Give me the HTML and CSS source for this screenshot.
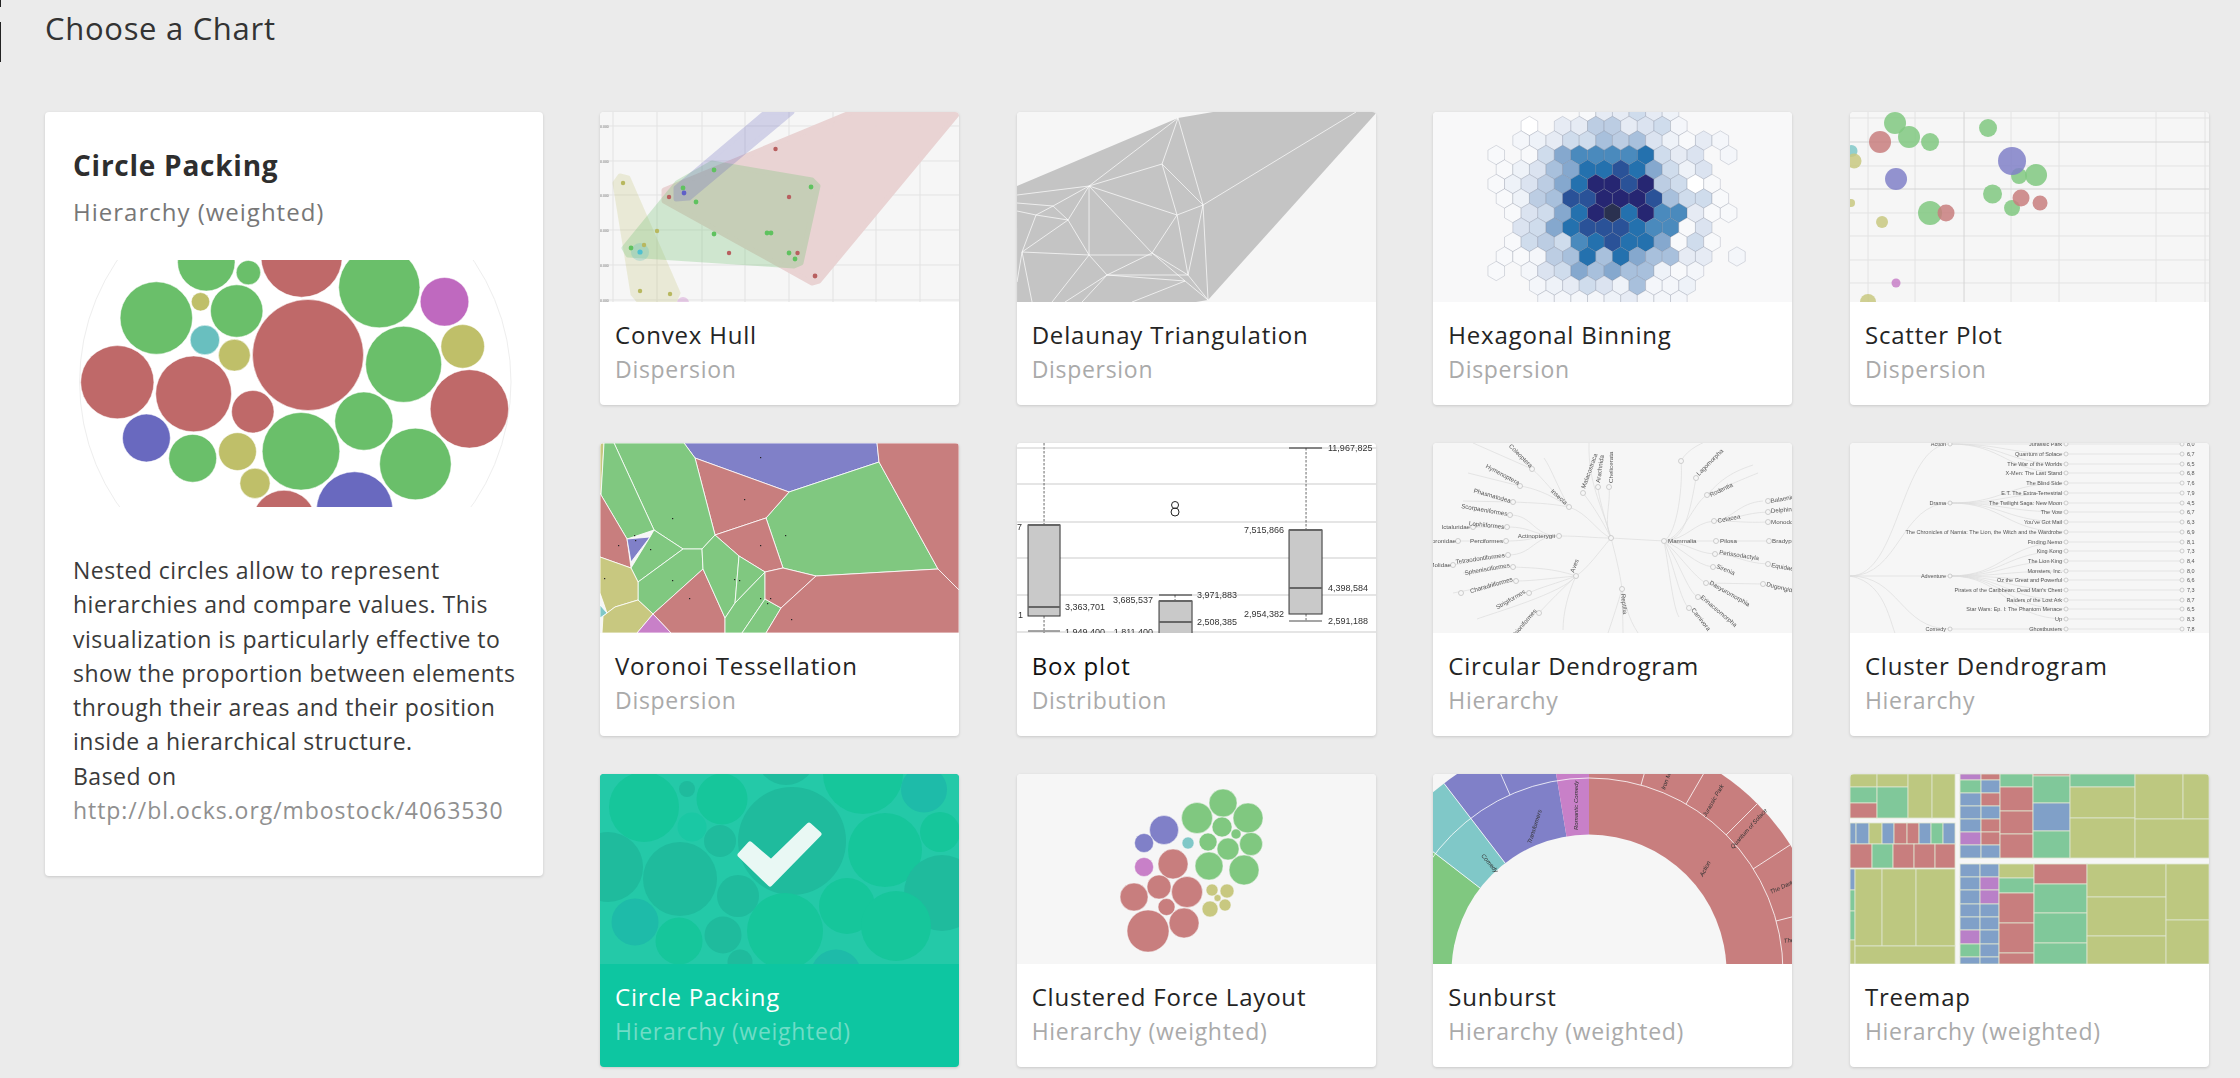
FILE: index.html
```html
<!DOCTYPE html>
<html lang="en">
<head>
<meta charset="utf-8">
<title>Choose a Chart</title>
<link rel="stylesheet" href="styles.css">
</head>
<body>
<div class="marks"><i class="mark-a"></i><i class="mark-b"></i></div>
<div class="page">
<h1 class="page-title">Choose a Chart</h1>
<main class="layout">
<aside class="detail">
<h2 class="detail-name">Circle Packing</h2>
<p class="detail-type">Hierarchy (weighted)</p>
<svg class="detail-chart" viewBox="73 260 442 247">
<circle class="ring" cx="295.3" cy="382" r="215.7"/>
<g class="solid">
<circle class="g" cx="206.3" cy="262.3" r="28.7"/><circle class="g" cx="248.4" cy="272.6" r="12.2"/><circle class="r" cx="301.6" cy="256.6" r="40.6"/><circle class="g" cx="379.3" cy="287.2" r="40.6"/><circle class="p" cx="444.5" cy="301.8" r="24.3"/><circle class="g" cx="156.3" cy="318" r="36.2"/><circle class="o" cx="200.5" cy="301.8" r="9.2"/><circle class="g" cx="236.7" cy="311" r="26.2"/><circle class="t" cx="204.9" cy="340" r="14.7"/><circle class="o" cx="234.4" cy="355.2" r="15.9"/><circle class="r" cx="308" cy="355" r="55.5"/><circle class="g" cx="403.6" cy="364.3" r="38"/><circle class="o" cx="462.7" cy="346.4" r="21.8"/><circle class="r" cx="117.3" cy="382.2" r="36.6"/><circle class="r" cx="193.6" cy="393.9" r="37.9"/><circle class="r" cx="252.8" cy="411.7" r="21.2"/><circle class="r" cx="469.4" cy="408.9" r="39.2"/><circle class="g" cx="363.9" cy="421.1" r="29.1"/><circle class="b" cx="146.4" cy="438" r="23.9"/><circle class="g" cx="192.7" cy="458.3" r="23.9"/><circle class="o" cx="237.5" cy="451.6" r="18.9"/><circle class="g" cx="301" cy="451.3" r="38.8"/><circle class="g" cx="415.4" cy="464" r="35.8"/><circle class="o" cx="255" cy="483.3" r="15.1"/><circle class="r" cx="284" cy="522" r="31.7"/><circle class="b" cx="354.6" cy="509.9" r="38.1"/>
</g>
</svg>
<p class="detail-text">Nested circles allow to represent<br>hierarchies and compare values. This<br>visualization is particularly effective to<br>show the proportion between elements<br>through their areas and their position<br>inside a hierarchical structure.<br>Based on<br><a class="detail-link" href="#">http://bl.ocks.org/mbostock/4063530</a></p>
</aside>
<section class="grid">

<article class="tile">
<svg class="thumb" viewBox="0 0 359 190">
<g class="grid-line"><path d="M13 0V190M57 0V190M102 0V190M145 0V190M189 0V190M233 0V190M276 0V190M320 0V190M0 14H359M0 49H359M0 83H359M0 118H359M0 153H359M0 188H359"/></g>
<g class="tiny"><text x="0" y="16">0.000</text><text x="0" y="51">0.000</text><text x="0" y="85">0.000</text><text x="0" y="120">0.000</text><text x="0" y="155">0.000</text><text x="0" y="190">0.000</text></g>
<g class="hull">
<polygon class="hr" points="64,78 252,0 359,0 219,169 212,171 64,89"/>
<polygon class="ho" points="20,64 28,66 78,181 74,190 38,188 33,182 15,71"/>
<polygon class="hg" points="77,71 112,51 212,68 218,74 201,151 194,154 28,143 24,136"/>
<polygon class="hb" points="76,76 166,0 192,0 89,86 76,87"/>
<circle class="ht" cx="40" cy="140" r="9"/>
<circle class="hp" cx="83" cy="191" r="6"/>
</g>
<g class="dots">
<circle class="r" cx="175.5" cy="37" r="2.2"/><circle class="r" cx="69" cy="85" r="2.2"/><circle class="r" cx="189" cy="85" r="2.2"/><circle class="r" cx="129" cy="141" r="2.2"/><circle class="r" cx="197.5" cy="141" r="2.2"/><circle class="r" cx="215" cy="164" r="2.4"/>
<circle class="g" cx="114" cy="58" r="2.4"/><circle class="g" cx="83" cy="76" r="2.4"/><circle class="g" cx="96" cy="90" r="2.4"/><circle class="g" cx="211" cy="75" r="2.4"/><circle class="g" cx="114" cy="122" r="2.4"/><circle class="g" cx="167" cy="121" r="2.4"/><circle class="g" cx="171" cy="121" r="2.4"/><circle class="g" cx="189" cy="141" r="2.4"/><circle class="g" cx="195" cy="147" r="2.4"/><circle class="g" cx="31" cy="136" r="2.4"/>
<circle class="o" cx="44" cy="133" r="2.2"/><circle class="o" cx="57" cy="119" r="2.2"/><circle class="o" cx="23" cy="71" r="2.2"/><circle class="o" cx="40" cy="179" r="2.2"/><circle class="o" cx="70" cy="182" r="2.2"/>
<circle class="b" cx="84" cy="81" r="2.4"/><circle class="t" cx="40" cy="140" r="2.6"/>
</g>
</svg>
<div class="tile-body"><h3 class="tile-name">Convex Hull</h3><p class="tile-type">Dispersion</p></div>
</article>

<article class="tile">
<svg class="thumb" viewBox="0 0 359 190">
<polygon class="mesh" points="0,74 161,6 196,0 360,0 191,188 179,190 0,190"/>
<path class="mesh-line" d="M161 6L72 74M161 6L145 52M161 6L186 93M145 52L72 74M145 52L186 93M145 52L160 103M72 74L160 103M72 74L51 108M72 74V143M72 74L135 141M72 74L0 83M72 74L36 94M160 103L186 93M160 103L135 141M160 103L171 163M186 93L339 0M186 93L191 188M186 93L171 163M36 94L51 108M36 94L19 103M36 94L0 91M19 103L51 108M19 103L5 140M19 103L0 99M51 108L5 140M51 108L72 143M5 140L72 143M72 143H135M72 143L90 163M135 141L90 163M135 141L171 163M135 141L168 169M90 163H171M90 163L168 169M168 169L191 188M171 163L191 188M5 140L15 190M5 140L0 170M72 143L35 190M90 163L48 190M90 163L65 190M168 169L115 190"/>
</svg>
<div class="tile-body"><h3 class="tile-name">Delaunay Triangulation</h3><p class="tile-type">Dispersion</p></div>
</article>

<article class="tile">
<svg class="thumb hexbg" viewBox="0 0 359 190">
<defs><polygon id="x" points="0,-.666 1,-.333 1,.333 0,.666 -1,.333 -1,-.333"/></defs>
<g class="hexes" transform="translate(179.4 101) scale(8.3 14.5)">
<use href="#x" x="-3" y="-7" class="a"/><use href="#x" x="-1" y="-7" class="d"/><use href="#x" x="1" y="-7" class="d"/><use href="#x" x="3" y="-7" class="f"/><use href="#x" x="5" y="-7" class="d"/><use href="#x" x="7" y="-7" class="c"/>
<use href="#x" x="-10" y="-6" class="w"/><use href="#x" x="-6" y="-6" class="d"/><use href="#x" x="-4" y="-6" class="d"/><use href="#x" x="-2" y="-6" class="g"/><use href="#x" x="0" y="-6" class="g"/><use href="#x" x="2" y="-6" class="d"/><use href="#x" x="4" y="-6" class="e"/><use href="#x" x="6" y="-6" class="f"/><use href="#x" x="8" y="-6" class="b"/>
<use href="#x" x="-11" y="-5" class="b"/><use href="#x" x="-9" y="-5" class="c"/><use href="#x" x="-7" y="-5" class="d"/><use href="#x" x="-5" y="-5" class="f"/><use href="#x" x="-3" y="-5" class="f"/><use href="#x" x="-1" y="-5" class="h"/><use href="#x" x="1" y="-5" class="g"/><use href="#x" x="3" y="-5" class="h"/><use href="#x" x="5" y="-5" class="e"/><use href="#x" x="7" y="-5" class="c"/><use href="#x" x="9" y="-5" class="a"/><use href="#x" x="11" y="-5" class="d"/><use href="#x" x="13" y="-5" class="b"/>
<use href="#x" x="-14" y="-4" class="a"/><use href="#x" x="-10" y="-4" class="a"/><use href="#x" x="-8" y="-4" class="f"/><use href="#x" x="-6" y="-4" class="i"/><use href="#x" x="-4" y="-4" class="j"/><use href="#x" x="-2" y="-4" class="j"/><use href="#x" x="0" y="-4" class="j"/><use href="#x" x="2" y="-4" class="j"/><use href="#x" x="4" y="-4" class="k"/><use href="#x" x="6" y="-4" class="f"/><use href="#x" x="8" y="-4" class="d"/><use href="#x" x="10" y="-4" class="e"/><use href="#x" x="14" y="-4" class="b"/>
<use href="#x" x="-13" y="-3" class="a"/><use href="#x" x="-11" y="-3" class="c"/><use href="#x" x="-9" y="-3" class="e"/><use href="#x" x="-7" y="-3" class="h"/><use href="#x" x="-5" y="-3" class="i"/><use href="#x" x="-3" y="-3" class="k"/><use href="#x" x="-1" y="-3" class="k"/><use href="#x" x="1" y="-3" class="l"/><use href="#x" x="3" y="-3" class="k"/><use href="#x" x="5" y="-3" class="i"/><use href="#x" x="7" y="-3" class="f"/><use href="#x" x="9" y="-3" class="c"/><use href="#x" x="11" y="-3" class="e"/>
<use href="#x" x="-14" y="-2" class="a"/><use href="#x" x="-12" y="-2" class="c"/><use href="#x" x="-10" y="-2" class="e"/><use href="#x" x="-8" y="-2" class="g"/><use href="#x" x="-6" y="-2" class="i"/><use href="#x" x="-4" y="-2" class="k"/><use href="#x" x="-2" y="-2" class="m"/><use href="#x" x="0" y="-2" class="m"/><use href="#x" x="2" y="-2" class="l"/><use href="#x" x="4" y="-2" class="m"/><use href="#x" x="6" y="-2" class="g"/><use href="#x" x="8" y="-2" class="f"/><use href="#x" x="10" y="-2" class="w"/><use href="#x" x="12" y="-2" class="a"/>
<use href="#x" x="-13" y="-1" class="a"/><use href="#x" x="-11" y="-1" class="c"/><use href="#x" x="-9" y="-1" class="g"/><use href="#x" x="-7" y="-1" class="h"/><use href="#x" x="-5" y="-1" class="l"/><use href="#x" x="-3" y="-1" class="l"/><use href="#x" x="-1" y="-1" class="m"/><use href="#x" x="1" y="-1" class="m"/><use href="#x" x="3" y="-1" class="m"/><use href="#x" x="5" y="-1" class="l"/><use href="#x" x="7" y="-1" class="h"/><use href="#x" x="9" y="-1" class="f"/><use href="#x" x="11" y="-1" class="f"/><use href="#x" x="13" y="-1" class="a"/>
<use href="#x" x="-12" y="0" class="a"/><use href="#x" x="-10" y="0" class="e"/><use href="#x" x="-8" y="0" class="f"/><use href="#x" x="-6" y="0" class="i"/><use href="#x" x="-4" y="0" class="k"/><use href="#x" x="-2" y="0" class="m"/><use href="#x" x="0" y="0" class="n"/><use href="#x" x="2" y="0" class="k"/><use href="#x" x="4" y="0" class="m"/><use href="#x" x="6" y="0" class="j"/><use href="#x" x="8" y="0" class="j"/><use href="#x" x="10" y="0" class="d"/><use href="#x" x="12" y="0" class="a"/><use href="#x" x="14" y="0" class="a"/>
<use href="#x" x="-11" y="1" class="e"/><use href="#x" x="-9" y="1" class="f"/><use href="#x" x="-7" y="1" class="i"/><use href="#x" x="-5" y="1" class="k"/><use href="#x" x="-3" y="1" class="l"/><use href="#x" x="-1" y="1" class="l"/><use href="#x" x="1" y="1" class="l"/><use href="#x" x="3" y="1" class="k"/><use href="#x" x="5" y="1" class="j"/><use href="#x" x="7" y="1" class="j"/><use href="#x" x="9" y="1" class="a"/><use href="#x" x="11" y="1" class="e"/>
<use href="#x" x="-12" y="2" class="a"/><use href="#x" x="-10" y="2" class="f"/><use href="#x" x="-8" y="2" class="g"/><use href="#x" x="-6" y="2" class="f"/><use href="#x" x="-4" y="2" class="j"/><use href="#x" x="-2" y="2" class="k"/><use href="#x" x="0" y="2" class="l"/><use href="#x" x="2" y="2" class="k"/><use href="#x" x="4" y="2" class="k"/><use href="#x" x="6" y="2" class="i"/><use href="#x" x="8" y="2" class="a"/><use href="#x" x="10" y="2" class="f"/><use href="#x" x="12" y="2" class="a"/>
<use href="#x" x="-13" y="3" class="a"/><use href="#x" x="-11" y="3" class="a"/><use href="#x" x="-9" y="3" class="b"/><use href="#x" x="-7" y="3" class="g"/><use href="#x" x="-5" y="3" class="h"/><use href="#x" x="-3" y="3" class="k"/><use href="#x" x="-1" y="3" class="h"/><use href="#x" x="1" y="3" class="k"/><use href="#x" x="3" y="3" class="i"/><use href="#x" x="5" y="3" class="h"/><use href="#x" x="7" y="3" class="h"/><use href="#x" x="9" y="3" class="d"/><use href="#x" x="11" y="3" class="d"/><use href="#x" x="15" y="3" class="b"/>
<use href="#x" x="-14" y="4" class="a"/><use href="#x" x="-10" y="4" class="b"/><use href="#x" x="-8" y="4" class="e"/><use href="#x" x="-6" y="4" class="f"/><use href="#x" x="-4" y="4" class="i"/><use href="#x" x="-2" y="4" class="h"/><use href="#x" x="0" y="4" class="i"/><use href="#x" x="2" y="4" class="h"/><use href="#x" x="4" y="4" class="h"/><use href="#x" x="6" y="4" class="c"/><use href="#x" x="8" y="4" class="a"/><use href="#x" x="10" y="4" class="b"/>
<use href="#x" x="-9" y="5" class="b"/><use href="#x" x="-7" y="5" class="c"/><use href="#x" x="-5" y="5" class="d"/><use href="#x" x="-3" y="5" class="f"/><use href="#x" x="-1" y="5" class="e"/><use href="#x" x="1" y="5" class="c"/><use href="#x" x="3" y="5" class="h"/><use href="#x" x="5" y="5" class="b"/><use href="#x" x="7" y="5" class="b"/><use href="#x" x="9" y="5" class="c"/>
<use href="#x" x="-8" y="6" class="b"/><use href="#x" x="-6" y="6" class="b"/><use href="#x" x="-4" y="6" class="b"/><use href="#x" x="-2" y="6" class="b"/><use href="#x" x="0" y="6" class="c"/><use href="#x" x="2" y="6" class="d"/><use href="#x" x="4" y="6" class="b"/><use href="#x" x="6" y="6" class="b"/><use href="#x" x="8" y="6" class="b"/>
</g>
</svg>
<div class="tile-body"><h3 class="tile-name">Hexagonal Binning</h3><p class="tile-type">Dispersion</p></div>
</article>

<article class="tile">
<svg class="thumb" viewBox="0 0 359 190">
<path class="grid-line" d="M0 6H359M0 54H359M0 101H359M0 124H359M0 148H359M0 171H359M18 0V190M65 0V190M161 0V190M209 0V190M306 0V190M355 0V190"/>
<path class="grid-strong" d="M0 30H359M0 77H359M114 0V190"/>
<g class="soft">
<circle class="g" cx="45" cy="11" r="11"/><circle class="g" cx="59" cy="25" r="11"/><circle class="r" cx="30" cy="30" r="11"/><circle class="g" cx="80" cy="30" r="9"/><circle class="g" cx="138" cy="16" r="9"/><circle class="t" cx="1.5" cy="39" r="6"/><circle class="o" cx="4" cy="49" r="7.5"/><circle class="b" cx="46" cy="67" r="11"/><circle class="g" cx="169" cy="64" r="8"/><circle class="g" cx="186" cy="63" r="11"/><circle class="b" cx="162" cy="49" r="14"/><circle class="g" cx="142.500" cy="82" r="9.500"/><circle class="g" cx="162" cy="96" r="8"/><circle class="r" cx="171" cy="86" r="8.500"/><circle class="r" cx="190" cy="91" r="7.500"/><circle class="o" cx="1" cy="91" r="4"/><circle class="g" cx="80" cy="101" r="12"/><circle class="r" cx="96" cy="101" r="8.500"/><circle class="o" cx="32" cy="110" r="6"/><circle class="p" cx="46" cy="171" r="4.500"/><circle class="o" cx="18" cy="190" r="8"/>
</g>
</svg>
<div class="tile-body"><h3 class="tile-name">Scatter Plot</h3><p class="tile-type">Dispersion</p></div>
</article>

<article class="tile">
<svg class="thumb" viewBox="0 0 359 190">
<g class="cells">
<polygon class="c-o" points="0,0 4,0 1,52 0,50"/>
<polygon class="c-b" points="84,0 277,0 279,19 189,49 95,15"/>
<polygon class="c-g" points="279,19 338,126 216,133 183,125 166,75 189,49"/>
<polygon class="c-r" points="277,0 359,0 359,147 338,126 279,19"/>
<polygon class="c-r" points="95,15 189,49 166,75 115,92"/>
<polygon class="c-r" points="115,92 166,75 183,125 165,129 139,113"/>
<polygon class="c-g" points="14,0 84,0 95,15 115,92 102,106 83,106 54,87"/>
<polygon class="c-g" points="4,0 14,0 54,87 27,96 1,52"/>
<polygon class="c-r" points="0,50 1,52 27,96 31,125 0,114"/>
<polygon class="c-b" points="27,96 50,94 31,119"/>
<polygon class="c-g" points="54,87 83,106 38,139 31,125 50,94"/>
<polygon class="c-g" points="83,106 102,106 103,126 53,171 38,157 38,139"/>
<polygon class="c-r" points="103,126 125,175 125,190 71,190 53,171"/>
<polygon class="c-g" points="102,106 115,92 139,113 135,160 125,175 103,126"/>
<polygon class="c-g" points="139,113 165,129 135,160"/>
<polygon class="c-g" points="165,129 165,156 142,190 125,190 125,175 135,160"/>
<polygon class="c-g" points="165,156 181,165 166,190 142,190"/>
<polygon class="c-r" points="165,129 183,125 216,133 181,165 165,156"/>
<polygon class="c-r" points="216,133 338,126 359,147 359,190 166,190 181,165"/>
<polygon class="c-o" points="0,114 31,125 38,139 38,157 15,164 7,170 0,150"/>
<polygon class="c-o" points="15,164 38,157 53,171 37,190 2,190 3,173"/>
<polygon class="c-p" points="53,171 71,190 37,190"/>
<polygon class="c-t" points="0,162 7,170 0,175"/>
</g>
<g class="seed"><rect x="160" y="14" width="1.200" height="1.200"/><rect x="144" y="56" width="1.200" height="1.200"/><rect x="72" y="75" width="1.200" height="1.200"/><rect x="185" y="92" width="1.200" height="1.200"/><rect x="160" y="102" width="1.200" height="1.200"/><rect x="34" y="92" width="1.200" height="1.200"/><rect x="35" y="97" width="1.200" height="1.200"/><rect x="50" y="106" width="1.200" height="1.200"/><rect x="18" y="102" width="1.200" height="1.200"/><rect x="72" y="137" width="1.200" height="1.200"/><rect x="4" y="135" width="1.200" height="1.200"/><rect x="89" y="155" width="1.200" height="1.200"/><rect x="134" y="136" width="1.200" height="1.200"/><rect x="139" y="137" width="1.200" height="1.200"/><rect x="160" y="155" width="1.200" height="1.200"/><rect x="170" y="155" width="1.200" height="1.200"/><rect x="167" y="160" width="1.200" height="1.200"/><rect x="191" y="176" width="1.200" height="1.200"/></g>
</svg>
<div class="tile-body"><h3 class="tile-name">Voronoi Tessellation</h3><p class="tile-type">Dispersion</p></div>
</article>

<article class="tile">
<svg class="thumb thumb-white" viewBox="0 0 359 190">
<path class="box-grid" d="M0 5H359M0 41H359M0 79H359M0 115H359M0 152H359M0 189H359"/>
<path class="whisker" d="M27 0V82M27 173V190M289 5V87M289 171V178M158 152V158"/>
<path class="box-line" d="M142 152H175M272 5H305"/>
<path class="box-soft" d="M11 188H43M272 178H305"/>
<rect class="box" x="11" y="82" width="32" height="91"/><rect class="box" x="142" y="158" width="33" height="40"/><rect class="box" x="272" y="87" width="33" height="84"/>
<path class="median" d="M11 82H43M11 164H43M142 179H175M272 87H305M272 145H305M142 158H175"/>
<circle class="outlier" cx="158" cy="62" r="3.500"/><circle class="outlier" cx="158" cy="69" r="4"/>
<g class="box-label">
<text x="311" y="8">11,967,825</text><text class="end" x="267" y="90">7,515,866</text><text x="311" y="148">4,398,584</text><text class="end" x="267" y="174">2,954,382</text><text x="311" y="181">2,591,188</text>
<text x="0" y="87">7</text><text x="1" y="175">1</text><text x="48" y="167">3,363,701</text><text x="48" y="192">1,949,400</text>
<text x="180" y="155">3,971,883</text><text class="end" x="136" y="160">3,685,537</text><text x="180" y="182">2,508,385</text><text class="end" x="136" y="192">1,811,400</text>
</g>
</svg>
<div class="tile-body"><h3 class="tile-name tile-name-dark">Box plot</h3><p class="tile-type">Distribution</p></div>
</article>

<article class="tile">
<svg class="thumb thumb-dendro" viewBox="0 0 359 190">
<path class="link" d="M178 95L231 98M178 95C160 95 150 93 126 93M178 95C165 110 155 125 143 133M178 95C182 110 187 130 189 146M178 95C165 90 155 70 136 64M178 95C170 80 178 60 176 44M178 95C170 70 165 50 165 44M178 95C168 75 158 60 150 50M178 95C168 60 155 40 156 0
M231 98C250 96 255 80 263 35M231 98C245 90 250 40 248 18M231 98C250 95 260 60 274 52M231 98C255 96 260 80 281 78M231 98H283M231 98C255 100 262 110 282 111M231 98C250 105 262 122 280 124M231 98C245 110 262 135 273 140M231 98C245 115 255 150 265 154M231 98C240 120 248 160 256 165M231 98C236 125 240 165 246 174
M126 93C100 93 100 84 74 84M126 93C100 93 100 98 73 98M126 93C100 93 100 112 75 112M126 93C100 93 100 72 77 72M281 78C300 76 305 60 330 58M281 78C305 76 310 70 335 69M281 78C305 78 310 80 335 79M283 98H336M282 111C305 112 310 120 335 121M273 140L330 141
M136 64C115 60 100 60 80 59M136 64C115 50 100 45 87 43M136 64C120 50 110 35 99 26M136 64C125 45 118 25 111 15
M143 133C120 125 100 125 80 124M143 133C120 135 100 138 83 138M143 133C125 140 105 145 96 150M143 133C130 145 115 160 106 170M143 133C135 150 130 170 130 187M143 133C130 150 60 170 44 176
M189 146C185 160 180 175 175 190M189 146C192 160 195 175 205 190M189 146C189 160 190 175 190 190M248 18C255 5 270 0 280 -5M274 52C285 40 295 30 320 22M274 52C290 45 300 40 325 30M74 84H40M73 98H25M75 112L20 122M80 124L30 130M83 138L20 150M80 59L30 58M87 43L35 30M99 26L40 0"/>
<g class="node">
<circle cx="178" cy="95" r="2.500"/><circle cx="231" cy="98" r="2.500"/><circle cx="126" cy="93" r="2.500"/><circle cx="143" cy="133" r="2.500"/><circle cx="189" cy="146" r="2.500"/><circle cx="136" cy="64" r="2.500"/><circle cx="176" cy="44" r="2.500"/><circle cx="165" cy="44" r="2.500"/><circle cx="150" cy="50" r="2.500"/>
<circle cx="248" cy="18" r="2.500"/><circle cx="263" cy="35" r="2.500"/><circle cx="274" cy="52" r="2.500"/><circle cx="281" cy="78" r="2.500"/><circle cx="283" cy="98" r="2.500"/><circle cx="282" cy="111" r="2.500"/><circle cx="280" cy="124" r="2.500"/><circle cx="273" cy="140" r="2.500"/><circle cx="265" cy="154" r="2.500"/><circle cx="256" cy="165" r="2.500"/>
<circle cx="74" cy="84" r="2.500"/><circle cx="73" cy="98" r="2.500"/><circle cx="75" cy="112" r="2.500"/><circle cx="77" cy="72" r="2.500"/><circle cx="80" cy="59" r="2.500"/><circle cx="87" cy="43" r="2.500"/><circle cx="99" cy="26" r="2.500"/><circle cx="80" cy="124" r="2.500"/><circle cx="83" cy="138" r="2.500"/><circle cx="96" cy="150" r="2.500"/><circle cx="106" cy="170" r="2.500"/>
<circle cx="335" cy="58" r="2.500"/><circle cx="335" cy="69" r="2.500"/><circle cx="335" cy="79" r="2.500"/><circle cx="336" cy="98" r="2.500"/><circle cx="335" cy="121" r="2.500"/><circle cx="330" cy="141" r="2.500"/><circle cx="40" cy="84" r="2.500"/><circle cx="25" cy="98" r="2.500"/><circle cx="20" cy="122" r="2.500"/><circle cx="28" cy="150" r="2.500"/>
</g>
<g class="dendro-label">
<text class="end" x="122" y="95">Actinopterygii</text><text x="235" y="100">Mammalia</text>
<text class="end" x="71" y="86" transform="rotate(6 71 86)">Lophiiformes</text><text class="end" x="70" y="100">Perciformes</text><text class="end" x="72" y="114" transform="rotate(-8 72 114)">Tetraodontiformes</text><text class="end" x="74" y="73" transform="rotate(10 74 73)">Scorpaeniformes</text>
<text class="end" x="77" y="60" transform="rotate(16 77 60)">Phasmatodea</text><text class="end" x="85" y="42" transform="rotate(28 85 42)">Hymenoptera</text><text class="end" x="97" y="25" transform="rotate(45 97 25)">Coleoptera</text>
<text class="end" x="132" y="62" transform="rotate(42 132 62)">Insecta</text><text x="180" y="40" transform="rotate(-90 180 40)">Chelicerata</text><text x="167" y="40" transform="rotate(-82 167 40)">Arachnida</text><text x="152" y="46" transform="rotate(-70 152 46)">Malacostraca</text>
<text class="end" x="77" y="124" transform="rotate(-10 77 124)">Sphenisciformes</text><text class="end" x="80" y="138" transform="rotate(-16 80 138)">Charadriiformes</text><text class="end" x="93" y="150" transform="rotate(-30 93 150)">Strigiformes</text><text class="end" x="104" y="168" transform="rotate(-50 104 168)">Struthioniformes</text><text x="141" y="130" transform="rotate(-70 141 130)">Aves</text>
<text x="188" y="151" transform="rotate(84 188 151)">Reptilia</text>
<text x="285" y="80" transform="rotate(-12 285 80)">Cetacea</text><text x="278" y="54" transform="rotate(-26 278 54)">Rodentia</text><text x="266" y="33" transform="rotate(-45 266 33)">Lagomorpha</text><text x="287" y="100">Pilosa</text><text x="286" y="111" transform="rotate(9 286 111)">Perissodactyla</text><text x="283" y="125" transform="rotate(22 283 125)">Sirenia</text><text x="276" y="141" transform="rotate(30 276 141)">Dasyuromorphia</text><text x="267" y="155" transform="rotate(40 267 155)">Erinaceomorpha</text><text x="258" y="167" transform="rotate(52 258 167)">Carnivora</text>
<text x="338" y="60" transform="rotate(-10 338 60)">Balaenidae</text><text x="338" y="70" transform="rotate(-5 338 70)">Delphinidae</text><text x="338" y="81">Monodontidae</text><text x="339" y="100">Bradypodidae</text><text x="338" y="124" transform="rotate(10 338 124)">Equidae</text><text x="333" y="143" transform="rotate(14 333 143)">Dugongidae</text>
<text class="end" x="37" y="86">Ictaluridae</text><text class="end" x="23" y="100">Moronidae</text><text class="end" x="18" y="124">Molidae</text>
</g>
</svg>
<div class="tile-body"><h3 class="tile-name">Circular Dendrogram</h3><p class="tile-type">Hierarchy</p></div>
</article>

<article class="tile">
<svg class="thumb thumb-dendro" viewBox="0 0 359 190">
<path class="link" d="M0 133C50 133 50 1 100 1M0 133C50 133 50 60 100 60M0 133H100M0 133C50 133 50 186 100 186M0 133C40 140 40 190 50 200
M100 1C155 1 155 1 216 1M100 1C155 1 155 11 216 11M100 1C155 1 155 21 216 21M100 1C155 1 155 30 216 30M100 60C155 60 155 40 216 40M100 60C155 60 155 50 216 50M100 60H216M100 60C155 60 155 69 216 69M100 60C155 60 155 79 216 79M100 60C155 60 155 89 216 89M100 133C155 133 155 99 216 99M100 133C155 133 155 108 216 108M100 133C155 133 155 118 216 118M100 133C155 133 155 128 216 128M100 133C155 133 155 137 216 137M100 133C155 133 155 147 216 147M100 133C155 133 155 157 216 157M100 133C155 133 155 166 216 166M100 133C155 133 155 176 216 176M100 186H216"/>
<path class="link-strong" d="M216 1H332M216 11H332M216 21H332M216 30H332M216 40H332M216 50H332M216 60H332M216 69H332M216 79H332M216 89H332M216 99H332M216 108H332M216 118H332M216 128H332M216 137H332M216 147H332M216 157H332M216 166H332M216 176H332M216 186H332"/>
<g class="node node-small"><circle cx="100" cy="1" r="2"/><circle cx="100" cy="60" r="2"/><circle cx="100" cy="133" r="2"/><circle cx="100" cy="186" r="2"/><circle cx="216" cy="1" r="2"/><circle cx="216" cy="11" r="2"/><circle cx="216" cy="21" r="2"/><circle cx="216" cy="30" r="2"/><circle cx="216" cy="40" r="2"/><circle cx="216" cy="50" r="2"/><circle cx="216" cy="60" r="2"/><circle cx="216" cy="69" r="2"/><circle cx="216" cy="79" r="2"/><circle cx="216" cy="89" r="2"/><circle cx="216" cy="99" r="2"/><circle cx="216" cy="108" r="2"/><circle cx="216" cy="118" r="2"/><circle cx="216" cy="128" r="2"/><circle cx="216" cy="137" r="2"/><circle cx="216" cy="147" r="2"/><circle cx="216" cy="157" r="2"/><circle cx="216" cy="166" r="2"/><circle cx="216" cy="176" r="2"/><circle cx="216" cy="186" r="2"/><circle cx="332" cy="1" r="2"/><circle cx="332" cy="11" r="2"/><circle cx="332" cy="21" r="2"/><circle cx="332" cy="30" r="2"/><circle cx="332" cy="40" r="2"/><circle cx="332" cy="50" r="2"/><circle cx="332" cy="60" r="2"/><circle cx="332" cy="69" r="2"/><circle cx="332" cy="79" r="2"/><circle cx="332" cy="89" r="2"/><circle cx="332" cy="99" r="2"/><circle cx="332" cy="108" r="2"/><circle cx="332" cy="118" r="2"/><circle cx="332" cy="128" r="2"/><circle cx="332" cy="137" r="2"/><circle cx="332" cy="147" r="2"/><circle cx="332" cy="157" r="2"/><circle cx="332" cy="166" r="2"/><circle cx="332" cy="176" r="2"/><circle cx="332" cy="186" r="2"/></g>
<g class="cluster-label">
<text class="end" x="96" y="3">Action</text><text class="end" x="96" y="62">Drama</text><text class="end" x="96" y="135">Adventure</text><text class="end" x="96" y="188">Comedy</text>
<text class="end" x="212" y="3">Jurassic Park</text><text class="end" x="212" y="13">Quantum of Solace</text><text class="end" x="212" y="23">The War of the Worlds</text><text class="end" x="212" y="32">X-Men: The Last Stand</text><text class="end" x="212" y="42">The Blind Side</text><text class="end" x="212" y="52">E.T. The Extra-Terrestrial</text><text class="end" x="212" y="62">The Twilight Saga: New Moon</text><text class="end" x="212" y="71">The Vow</text><text class="end" x="212" y="81">You've Got Mail</text><text class="end" x="212" y="91">The Chronicles of Narnia: The Lion, the Witch and the Wardrobe</text><text class="end" x="212" y="101">Finding Nemo</text><text class="end" x="212" y="110">King Kong</text><text class="end" x="212" y="120">The Lion King</text><text class="end" x="212" y="130">Monsters, Inc.</text><text class="end" x="212" y="139">Oz the Great and Powerful</text><text class="end" x="212" y="149">Pirates of the Caribbean: Dead Man's Chest</text><text class="end" x="212" y="159">Raiders of the Lost Ark</text><text class="end" x="212" y="168">Star Wars: Ep. I: The Phantom Menace</text><text class="end" x="212" y="178">Up</text><text class="end" x="212" y="188">Ghostbusters</text>
<text x="337" y="3">8,0</text><text x="337" y="13">6,7</text><text x="337" y="23">6,5</text><text x="337" y="32">6,8</text><text x="337" y="42">7,6</text><text x="337" y="52">7,9</text><text x="337" y="62">4,5</text><text x="337" y="71">6,7</text><text x="337" y="81">6,3</text><text x="337" y="91">6,9</text><text x="337" y="101">8,1</text><text x="337" y="110">7,3</text><text x="337" y="120">8,4</text><text x="337" y="130">8,0</text><text x="337" y="139">6,6</text><text x="337" y="149">7,3</text><text x="337" y="159">8,7</text><text x="337" y="168">6,5</text><text x="337" y="178">8,3</text><text x="337" y="188">7,8</text>
</g>
</svg>
<div class="tile-body"><h3 class="tile-name">Cluster Dendrogram</h3><p class="tile-type">Hierarchy</p></div>
</article>

<article class="tile tile-active">
<svg class="thumb thumb-active" viewBox="0 0 359 190">
<g>
<circle class="m1" cx="44" cy="33" r="35"/><circle class="m2" cx="87" cy="15" r="8"/><circle class="m1" cx="122" cy="25" r="25.500"/><circle class="m2" cx="186" cy="-19" r="30"/><circle class="m1" cx="263" cy="0" r="40"/><circle class="m3" cx="324" cy="15.600" r="23"/><circle class="m4" cx="92" cy="53" r="14.500"/><circle class="m2" cx="120" cy="67" r="16"/><circle class="m2" cx="192" cy="67" r="54"/><circle class="m1" cx="285" cy="76" r="37"/><circle class="m1" cx="340" cy="58" r="20"/><circle class="m2" cx="8" cy="93" r="35"/><circle class="m2" cx="80" cy="105" r="37"/><circle class="m2" cx="138" cy="122" r="21"/><circle class="m1" cx="247" cy="132" r="28"/><circle class="m2" cx="342" cy="119" r="38"/><circle class="m3" cx="35" cy="148" r="23.500"/><circle class="m1" cx="79" cy="167" r="23.500"/><circle class="m2" cx="123" cy="161" r="18.500"/><circle class="m1" cx="185" cy="157" r="38"/><circle class="m1" cx="296" cy="152" r="35"/><circle class="m2" cx="140" cy="188" r="12.500"/><circle class="m3" cx="236" cy="201" r="25.500"/>
</g>
<polygon class="check" points="209,51 219,60 170,110 140,81 150,70 171,88"/>
</svg>
<div class="tile-body"><h3 class="tile-name">Circle Packing</h3><p class="tile-type">Hierarchy (weighted)</p></div>
</article>

<article class="tile">
<svg class="thumb" viewBox="0 0 359 190">
<g class="force">
<circle class="c-g" cx="206" cy="29" r="14"/><circle class="c-g" cx="180" cy="44" r="15.500"/><circle class="c-g" cx="231" cy="44" r="15"/><circle class="c-g" cx="205" cy="53" r="10"/><circle class="c-g" cx="219" cy="60" r="5"/><circle class="c-g" cx="191" cy="68" r="9"/><circle class="c-g" cx="234" cy="70" r="11.500"/><circle class="c-g" cx="211" cy="75" r="11"/><circle class="c-g" cx="192" cy="92" r="14"/><circle class="c-g" cx="227" cy="96" r="15"/>
<circle class="c-b" cx="147" cy="56" r="14.500"/><circle class="c-b" cx="127" cy="69" r="9.500"/><circle class="c-t" cx="171" cy="69" r="6"/><circle class="c-p" cx="127" cy="93" r="9.500"/>
<circle class="c-r" cx="156" cy="90" r="15"/><circle class="c-r" cx="142" cy="113" r="12"/><circle class="c-r" cx="170" cy="118" r="15.500"/><circle class="c-r" cx="117" cy="123" r="14"/><circle class="c-r" cx="149.500" cy="133" r="8.500"/><circle class="c-r" cx="131" cy="157" r="21"/><circle class="c-r" cx="167" cy="149" r="15"/>
<circle class="c-o" cx="195" cy="116" r="6"/><circle class="c-o" cx="210" cy="117" r="7"/><circle class="c-o" cx="200.500" cy="124" r="3.500"/><circle class="c-o" cx="208" cy="131" r="6"/><circle class="c-o" cx="193" cy="135" r="8"/>
</g>
</svg>
<div class="tile-body"><h3 class="tile-name">Clustered Force Layout</h3><p class="tile-type">Hierarchy (weighted)</p></div>
</article>

<article class="tile">
<svg class="thumb" viewBox="0 0 359 190">
<path class="c-g" d="M156 198L-82 198A238 238 0 0 1 -32.600 52.800Z"/>
<path class="c-t" d="M156 198L-32.600 52.800A238 238 0 0 1 11 9.400Z"/>
<path class="c-b" d="M156 198L11 9.400A238 238 0 0 1 117 -36.800Z"/>
<path class="c-p" d="M156 198L117 -36.800A238 238 0 0 1 156 -40Z"/>
<path class="c-r" d="M156 198L156 -40A238 238 0 0 1 394 198Z"/>
<circle class="sun-ring" cx="156" cy="198" r="194"/>
<path class="sun-line" d="M208 11L220 -31M253 30L275 -8M293 61L324 30M320 95L357 71M343 147L386 136M77 21L59 -20M72 89L11 9.400M47 114L-32 53"/>
<circle class="sun-hole" cx="156" cy="198" r="137.500"/>
<g class="sun-label">
<text x="270" y="103" transform="rotate(-62 270 103)">Action</text><text x="145" y="56" transform="rotate(-90 145 56)">Romantic Comedy</text><text x="48" y="82" transform="rotate(50 48 82)">Comedy</text><text x="98" y="70" transform="rotate(-72 98 70)">Transformers</text><text x="300" y="75" transform="rotate(-48 300 75)">Quantum of Solace</text><text x="273" y="43" transform="rotate(-60 273 43)">Jurassic Park</text><text x="232" y="16" transform="rotate(-70 232 16)">Iron Man</text><text x="338" y="120" transform="rotate(-24 338 120)">The Dark</text><text x="351" y="169" transform="rotate(-6 351 169)">The</text>
</g>
</svg>
<div class="tile-body"><h3 class="tile-name">Sunburst</h3><p class="tile-type">Hierarchy (weighted)</p></div>
</article>

<article class="tile">
<svg class="thumb" viewBox="0 0 359 190">
<g class="tree">
<rect class="c-o2" x="0" y="0" width="27" height="13"/><rect class="c-o2" x="27" y="0" width="31" height="13"/><rect class="c-g2" x="0" y="13" width="27" height="16"/><rect class="c-r" x="0" y="29" width="27" height="15"/><rect class="c-g2" x="27" y="13" width="31" height="31"/><rect class="c-o2" x="58" y="0" width="24" height="44"/><rect class="c-o2" x="82" y="0" width="23" height="44"/>
<rect class="c-b2" x="0" y="49" width="6" height="21"/><rect class="c-b2" x="6" y="49" width="13" height="21"/><rect class="c-o2" x="19" y="49" width="13" height="21"/><rect class="c-b2" x="32" y="49" width="12" height="21"/><rect class="c-r" x="44" y="49" width="13" height="21"/><rect class="c-r" x="57" y="49" width="12" height="21"/><rect class="c-b2" x="69" y="49" width="12" height="21"/><rect class="c-g2" x="81" y="49" width="12" height="21"/><rect class="c-b2" x="93" y="49" width="12" height="21"/>
<rect class="c-r" x="0" y="70" width="22" height="24"/><rect class="c-g2" x="22" y="70" width="21" height="24"/><rect class="c-r" x="43" y="70" width="21" height="24"/><rect class="c-r" x="64" y="70" width="21" height="24"/><rect class="c-r" x="85" y="70" width="20" height="24"/>
<rect class="c-b2" x="0" y="95" width="5" height="21"/><rect class="c-g2" x="0" y="116" width="5" height="21"/><rect class="c-g2" x="0" y="137" width="5" height="29"/><rect class="c-o2" x="0" y="166" width="5" height="24"/><rect class="c-o2" x="5" y="95" width="27" height="77"/><rect class="c-o2" x="32" y="95" width="34" height="77"/><rect class="c-o2" x="66" y="95" width="39" height="77"/><rect class="c-o2" x="5" y="172" width="100" height="18"/>
<rect class="c-p2" x="110" y="0" width="21" height="6"/><rect class="c-r" x="131" y="0" width="19" height="6"/><rect class="c-g2" x="110" y="6" width="21" height="13"/><rect class="c-b2" x="131" y="6" width="19" height="13"/><rect class="c-b2" x="110" y="19" width="21" height="13"/><rect class="c-r" x="131" y="19" width="19" height="13"/><rect class="c-b2" x="110" y="32" width="21" height="13"/><rect class="c-b2" x="131" y="32" width="19" height="13"/><rect class="c-b2" x="110" y="45" width="21" height="13"/><rect class="c-r" x="131" y="45" width="19" height="13"/><rect class="c-p2" x="110" y="58" width="21" height="13"/><rect class="c-r" x="131" y="58" width="19" height="13"/><rect class="c-b2" x="110" y="71" width="21" height="13"/><rect class="c-b2" x="131" y="71" width="19" height="13"/>
<rect class="c-g2" x="150" y="0" width="33" height="13"/><rect class="c-r" x="150" y="13" width="33" height="24"/><rect class="c-r" x="150" y="37" width="33" height="23"/><rect class="c-r" x="150" y="60" width="33" height="24"/><rect class="c-r" x="183" y="0" width="37" height="2"/><rect class="c-g2" x="183" y="2" width="37" height="27"/><rect class="c-b2" x="183" y="29" width="37" height="28"/><rect class="c-g2" x="183" y="57" width="37" height="27"/>
<rect class="c-g2" x="220" y="0" width="65" height="13"/><rect class="c-o2" x="220" y="13" width="65" height="31"/><rect class="c-o2" x="220" y="44" width="65" height="40"/><rect class="c-o2" x="285" y="0" width="48" height="45"/><rect class="c-o2" x="333" y="0" width="26" height="45"/><rect class="c-o2" x="285" y="45" width="74" height="39"/>
<rect class="c-b2" x="110" y="90" width="20" height="13"/><rect class="c-b2" x="110" y="103" width="20" height="13"/><rect class="c-b2" x="110" y="116" width="20" height="14"/><rect class="c-b2" x="110" y="130" width="20" height="13"/><rect class="c-b2" x="110" y="143" width="20" height="13"/><rect class="c-p2" x="110" y="156" width="20" height="14"/><rect class="c-g2" x="110" y="170" width="20" height="13"/><rect class="c-b2" x="110" y="183" width="20" height="7"/>
<rect class="c-b2" x="130" y="90" width="19" height="13"/><rect class="c-p2" x="130" y="103" width="19" height="13"/><rect class="c-p2" x="130" y="116" width="19" height="14"/><rect class="c-b2" x="130" y="130" width="19" height="13"/><rect class="c-b2" x="130" y="143" width="19" height="13"/><rect class="c-b2" x="130" y="156" width="19" height="14"/><rect class="c-b2" x="130" y="170" width="19" height="13"/><rect class="c-b2" x="130" y="183" width="19" height="7"/>
<rect class="c-o2" x="149" y="90" width="35" height="14"/><rect class="c-g2" x="149" y="104" width="35" height="15"/><rect class="c-r" x="149" y="119" width="35" height="30"/><rect class="c-r" x="149" y="149" width="35" height="30"/><rect class="c-r" x="149" y="179" width="35" height="11"/>
<rect class="c-r" x="184" y="90" width="53" height="20"/><rect class="c-g2" x="184" y="110" width="53" height="29"/><rect class="c-g2" x="184" y="139" width="53" height="30"/><rect class="c-g2" x="184" y="169" width="53" height="21"/>
<rect class="c-o2" x="237" y="90" width="79" height="33"/><rect class="c-o2" x="237" y="123" width="79" height="39"/><rect class="c-o2" x="237" y="162" width="79" height="28"/><rect class="c-o2" x="316" y="90" width="43" height="56"/><rect class="c-o2" x="316" y="146" width="43" height="44"/>
</g>
</svg>
<div class="tile-body"><h3 class="tile-name">Treemap</h3><p class="tile-type">Hierarchy (weighted)</p></div>
</article>

</section>
</main>
</div>
</body>
</html>
```
FILE: styles.css
```css
* { box-sizing: border-box; }
html, body { margin: 0; height: 100%; }
body { background: #ebebeb; font-family: "Open Sans", "Liberation Sans", sans-serif; overflow: hidden; position: relative; }

.marks i { position: absolute; left: 0; width: 1px; background: #222; }
.mark-a { top: 0; height: 7px; }
.mark-b { top: 22px; height: 40px; }

.page { padding: 0 31px 0 45px; }
.page-title { margin: 0; height: 112px; padding-top: 8px; font-size: 31px; line-height: 40px; font-weight: 400; color: #333; letter-spacing: .7px; }

.layout { display: flex; align-items: flex-start; gap: 57px; }
.detail { flex: 0 0 498px; min-width: 0; height: 764px; background: #fff; border-radius: 4px; box-shadow: 0 1px 3px rgba(0,0,0,.15); padding: 35px 28px 0; }
.detail-name { margin: 0; font-size: 28px; line-height: 36px; font-weight: 700; color: #2e2e2e; letter-spacing: .75px; }
.detail-type { margin: 13px 0 0; font-size: 24px; line-height: 32px; color: #777; letter-spacing: 1px; }
.detail-chart { display: block; width: 442px; height: 247px; margin: 32px 0 0; overflow: hidden; }
.detail-text { margin: 46px 0 0; font-size: 23px; line-height: 34.300px; color: #3a3a3a; letter-spacing: .5px; white-space: nowrap; }
.detail-link { color: #909090; text-decoration: none; letter-spacing: .95px; }

.ring { fill: none; stroke: #eee; stroke-width: 1; }
.solid circle { stroke: #fff; stroke-width: .5; }
.solid .r { fill: #bf6969; } .solid .g { fill: #6abf6a; } .solid .b { fill: #6969bf; }
.solid .o { fill: #bfbf69; } .solid .p { fill: #bf69bf; } .solid .t { fill: #69bfbf; }

.grid { flex: 1; min-width: 0; display: grid; grid-template-columns: repeat(4, 1fr); column-gap: 57.600px; row-gap: 38px; }
.tile { height: 293px; background: #fff; border-radius: 4px; box-shadow: 0 1px 3px rgba(0,0,0,.15); overflow: hidden; }
.thumb { display: block; width: 100%; height: 190px; background: #f6f6f6; filter: blur(.3px); }
.thumb-white { background: #fff; }
.hexbg { background: #f8f8f9; }
.tile-body { height: 103px; padding: 16.500px 15px 0; }
.tile-name { margin: 0; font-size: 24px; line-height: 32px; font-weight: 400; color: #242424; letter-spacing: .8px; }
.tile-name-dark { color: #111; }
.tile-type { margin: 3px 0 0; font-size: 23px; line-height: 30px; color: #aaa; letter-spacing: .7px; }
.tile-active { background: #0dc6a1; }
.tile-active .tile-name { color: #fff; }
.tile-active .tile-type { color: #6fdcc6; }
.thumb-active { background: #24c9a8; filter: none; }
.m1 { fill: #16c69b; } .m2 { fill: #1fbb9d; } .m3 { fill: #1ebba9; } .m4 { fill: #1ac8a4; }
.check { fill: #e9f8f4; stroke: #e9f8f4; stroke-width: 5; stroke-linejoin: round; }

.c-r { fill: #c87e7e; } .c-g { fill: #80c880; } .c-b { fill: #8080c8; } .c-o { fill: #c8c880; } .c-p { fill: #c880c8; } .c-t { fill: #80c8c8; }
.c-o2 { fill: #bdc880; } .c-g2 { fill: #80c89a; } .c-b2 { fill: #80a0c8; } .c-p2 { fill: #b980c8; }
.cells polygon { stroke: #fff; stroke-width: .8; }
.seed rect { fill: #222; }
.force circle { stroke: #f6f6f6; stroke-width: .5; }
.tree rect { stroke: #dfe5cf; stroke-width: .8; }

.grid-line { fill: none; stroke: #e3e3e3; stroke-width: 1; }
.grid-line path { fill: none; stroke: #e3e3e3; }
.grid-strong { fill: none; stroke: #d4d4d4; stroke-width: 1; }
.tiny text { font: 3.500px "Liberation Sans", sans-serif; fill: #777; }
.hull polygon { stroke-linejoin: round; stroke-width: 5; }
.hull .hr { fill: #e9d2d2; stroke: #e9d2d2; opacity: .95; }
.hull .hg { fill: #78c378; stroke: #78c378; opacity: .3; }
.hull .ho { fill: #bfbf69; stroke: #bfbf69; opacity: .22; }
.hull .hb { fill: #6969bf; stroke: #6969bf; opacity: .26; }
.hull .ht { fill: #69bfbf; opacity: .3; }
.hull .hp { fill: #bf69bf; opacity: .3; }
.dots .r { fill: #b85f5f; } .dots .g { fill: #5fc25f; } .dots .o { fill: #b8b85f; } .dots .b { fill: #5f5fc8; } .dots .t { fill: #4fc0d0; }

.mesh { fill: #c4c4c4; }
.mesh-line { fill: none; stroke: #fff; stroke-width: .7; }

.hexes use { stroke: rgba(110,120,140,.35); stroke-width: .7; }
#x { vector-effect: non-scaling-stroke; }
.hexes .w { fill: #fff; } .hexes .a { fill: #f8f9fb; } .hexes .b { fill: #f4f6fa; } .hexes .c { fill: #eef2f8; } .hexes .d { fill: #e6ebf4; } .hexes .e { fill: #dbe3f0; } .hexes .f { fill: #cfdcec; } .hexes .g { fill: #bccde3; } .hexes .h { fill: #a8c0dc; } .hexes .i { fill: #85a8ce; } .hexes .j { fill: #4a8abd; } .hexes .k { fill: #2471ae; } .hexes .l { fill: #2a5298; } .hexes .m { fill: #262672; } .hexes .n { fill: #2a3150; }

.soft circle { opacity: .85; }
.soft .r { fill: #c87e7e; } .soft .g { fill: #80c880; } .soft .b { fill: #8080c8; } .soft .o { fill: #c8c880; } .soft .p { fill: #c880c8; } .soft .t { fill: #80c8c8; }

.box-grid { fill: none; stroke: #ddd; stroke-width: 1.400; }
.whisker { fill: none; stroke: #444; stroke-width: .8; stroke-dasharray: 2.500 1.500; }
.box-line { fill: none; stroke: #222; stroke-width: 1; }
.box-soft { fill: none; stroke: #888; stroke-width: 1.400; }
.box { fill: #c9c9c9; stroke: #333; stroke-width: 1; }
.median { fill: none; stroke: #666; stroke-width: 2; }
.outlier { fill: none; stroke: #222; stroke-width: 1; }
.box-label text { font: 9px "Liberation Sans", sans-serif; fill: #333; }
.end { text-anchor: end; }

.thumb-dendro { filter: blur(.35px); }
.link { fill: none; stroke: #ddd; stroke-width: .7; }
.link-strong { fill: none; stroke: #e4e4e4; stroke-width: 1; }
.node circle { fill: #f6f6f6; stroke: #bbb; stroke-width: .7; }
.dendro-label text { font: 6.200px "Liberation Sans", sans-serif; fill: #555; }
.cluster-label text { font: 5.500px "Liberation Sans", sans-serif; fill: #555; }

.sun-ring { fill: none; stroke: #fff; stroke-width: .8; }
.sun-line { fill: none; stroke: #fff; stroke-width: .8; }
.sun-hole { fill: #f6f6f6; }
.sun-label text { font: italic 6px "Liberation Sans", sans-serif; fill: #333; }
```
